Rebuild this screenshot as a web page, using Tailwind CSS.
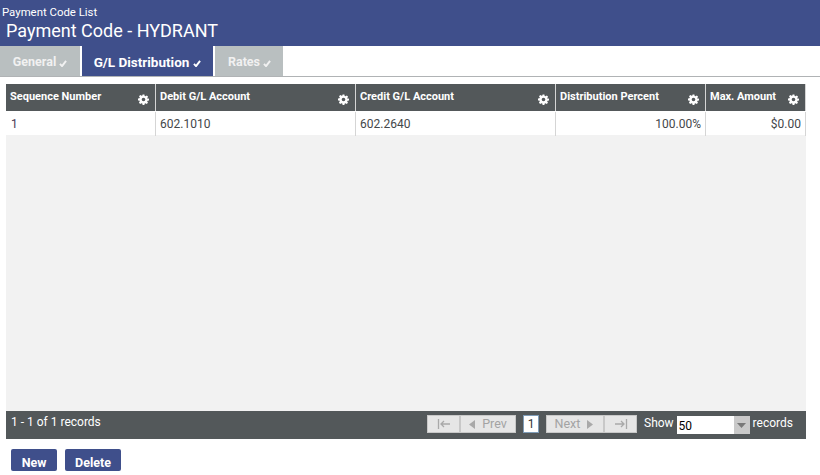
<!DOCTYPE html>
<html>
<head>
<meta charset="utf-8">
<script src="https://cdn.jsdelivr.net/npm/@tailwindcss/browser@4"></script>
</head>
<body class="w-[820px] h-[475px] overflow-hidden bg-white font-['Roboto',sans-serif] text-[#333]">
<header class="h-[46px] bg-[#3f4f8b] text-white">
  <div class="h-[19px] pl-[2px] pt-[5px] text-[11.4px] leading-[14px]">Payment Code List</div>
  <div class="pl-[6px] text-[18px] leading-[24px]">Payment Code - HYDRANT</div>
</header>
<nav class="flex h-[31px] gap-[2px] border-b border-[#b0b3b5] font-bold">
  <div class="flex w-[80px] h-[30px] items-center justify-center gap-[3px] bg-[#b9bfc0] pt-[2px] text-[12.5px] text-[#f1f1f1]">General
    <svg class="mt-[2px]" width="8" height="7" viewBox="0 0 9 8"><path d="M1 4.500 3.400 7 8 1" fill="none" stroke="currentColor" stroke-width="2.200"/></svg></div>
  <div class="flex w-[131px] h-[30px] items-center justify-center gap-[4px] bg-[#3f4f8b] pt-[2px] text-[13.500px] text-white">G/L Distribution
    <svg class="mt-[3px]" width="8" height="7" viewBox="0 0 9 8"><path d="M1 4.500 3.400 7 8 1" fill="none" stroke="currentColor" stroke-width="2.200"/></svg></div>
  <div class="flex w-[68px] h-[30px] items-center justify-center gap-[3px] bg-[#b9bfc0] pt-[2px] pl-[1px] text-[12.500px] text-[#f1f1f1]">Rates
    <svg class="mt-[2px]" width="8" height="7" viewBox="0 0 9 8"><path d="M1 4.500 3.400 7 8 1" fill="none" stroke="currentColor" stroke-width="2.200"/></svg></div>
</nav>
<main class="ml-[6px] mt-[7px] w-[800px]">
  <div class="grid h-[27px] grid-cols-[150px_200px_200px_150px_100px] bg-[#53585a] text-[11px] font-bold leading-[13px] text-white">
    <div class="relative border-r border-[#d5d5d5] pl-[4px] pt-[6px]">Sequence Number<svg class="absolute right-[6px] top-[10px]" width="11" height="11" viewBox="0 0 24 24"><path fill="#fff" fill-rule="evenodd" d="M10 1h4l.6 3.200 1.900.8 2.700-1.800 2.800 2.800-1.800 2.700.8 1.900L24 10v4l-3.200.6-.8 1.900 1.800 2.700-2.800 2.800-2.700-1.800-1.900.8L14 24h-4l-.6-3.200-1.900-.8-2.700 1.800L2 19l1.800-2.700-.8-1.900L0 14v-4l3.200-.6.8-1.900L2.200 5 5 2.200l2.700 1.800 1.900-.8zM12 8a4 4 0 1 0 0 8 4 4 0 0 0 0-8z"/></svg></div>
    <div class="relative border-r border-[#d5d5d5] pl-[4px] pt-[6px]">Debit G/L Account<svg class="absolute right-[6px] top-[10px]" width="11" height="11" viewBox="0 0 24 24"><path fill="#fff" fill-rule="evenodd" d="M10 1h4l.6 3.200 1.900.8 2.700-1.800 2.800 2.800-1.800 2.700.8 1.900L24 10v4l-3.200.6-.8 1.900 1.800 2.700-2.800 2.800-2.700-1.800-1.900.8L14 24h-4l-.6-3.200-1.900-.8-2.700 1.800L2 19l1.800-2.700-.8-1.900L0 14v-4l3.200-.6.8-1.900L2.200 5 5 2.200l2.700 1.800 1.900-.8zM12 8a4 4 0 1 0 0 8 4 4 0 0 0 0-8z"/></svg></div>
    <div class="relative border-r border-[#d5d5d5] pl-[4px] pt-[6px]">Credit G/L Account<svg class="absolute right-[6px] top-[10px]" width="11" height="11" viewBox="0 0 24 24"><path fill="#fff" fill-rule="evenodd" d="M10 1h4l.6 3.200 1.900.8 2.700-1.800 2.800 2.800-1.800 2.700.8 1.900L24 10v4l-3.200.6-.8 1.900 1.800 2.700-2.800 2.800-2.700-1.800-1.900.8L14 24h-4l-.6-3.200-1.900-.8-2.700 1.800L2 19l1.800-2.700-.8-1.900L0 14v-4l3.200-.6.8-1.900L2.200 5 5 2.200l2.700 1.800 1.900-.8zM12 8a4 4 0 1 0 0 8 4 4 0 0 0 0-8z"/></svg></div>
    <div class="relative border-r border-[#d5d5d5] pl-[4px] pt-[6px]">Distribution Percent<svg class="absolute right-[6px] top-[10px]" width="11" height="11" viewBox="0 0 24 24"><path fill="#fff" fill-rule="evenodd" d="M10 1h4l.6 3.200 1.900.8 2.700-1.800 2.800 2.800-1.800 2.700.8 1.900L24 10v4l-3.200.6-.8 1.900 1.800 2.700-2.800 2.800-2.700-1.800-1.900.8L14 24h-4l-.6-3.200-1.900-.8-2.700 1.800L2 19l1.800-2.700-.8-1.900L0 14v-4l3.200-.6.8-1.900L2.200 5 5 2.200l2.700 1.800 1.900-.8zM12 8a4 4 0 1 0 0 8 4 4 0 0 0 0-8z"/></svg></div>
    <div class="relative border-r border-[#d5d5d5] pl-[4px] pt-[6px]">Max. Amount<svg class="absolute right-[6px] top-[10px]" width="11" height="11" viewBox="0 0 24 24"><path fill="#fff" fill-rule="evenodd" d="M10 1h4l.6 3.200 1.900.8 2.700-1.800 2.800 2.800-1.800 2.700.8 1.900L24 10v4l-3.200.6-.8 1.900 1.800 2.700-2.800 2.800-2.700-1.800-1.900.8L14 24h-4l-.6-3.200-1.900-.8-2.700 1.800L2 19l1.800-2.700-.8-1.900L0 14v-4l3.200-.6.8-1.900L2.200 5 5 2.200l2.700 1.800 1.900-.8zM12 8a4 4 0 1 0 0 8 4 4 0 0 0 0-8z"/></svg></div>
  </div>
  <div class="grid h-[24px] grid-cols-[150px_200px_200px_150px_100px] bg-white pt-[1px] text-[12px] leading-[24px] text-[#44474a]">
    <div class="border-r border-[#d5d5d5] pl-[5px] text-[#4a3a55]">1</div>
    <div class="border-r border-[#d5d5d5] pl-[4px]">602.1010</div>
    <div class="border-r border-[#d5d5d5] pl-[4px]">602.2640</div>
    <div class="border-r border-[#d5d5d5] pr-[4px] text-right">100.00%</div>
    <div class="border-r border-[#d5d5d5] pr-[4px] text-right">$0.00</div>
  </div>
  <div class="h-[276px] bg-[#f2f2f2]"></div>
  <div class="flex h-[28px] items-center bg-[#53585a] text-[12px] text-white">
    <div class="mb-[6px] w-[421px] pl-[5px]">1 - 1 of 1 records</div>
    <div class="mb-[2px] flex h-[18px] w-[33px] items-center justify-center border border-[#c8c8c8] bg-[#e6e6e6]"><svg width="14" height="10" viewBox="0 0 14 10"><path d="M1.500 0v10M13 5H4M7 2 4 5l3 3" fill="none" stroke="#a9a9a9" stroke-width="1.300"/></svg></div>
    <div class="mb-[2px] flex h-[18px] w-[56px] items-center justify-center gap-[7px] border border-[#c8c8c8] bg-[#e6e6e6] text-[#a3a3a3]"><svg width="6" height="9" viewBox="0 0 6 9"><path d="M6 0v9L0 4.500z" fill="#a9a9a9"/></svg><span class="text-[12.500px]">Prev</span></div>
    <div class="mb-[2px] ml-[7px] flex h-[18px] w-[16px] items-center justify-center border border-[#7f9db9] bg-white text-[#333]">1</div>
    <div class="mb-[2px] ml-[7px] flex h-[18px] w-[58px] items-center justify-center gap-[7px] border border-[#c8c8c8] bg-[#e6e6e6] pr-[2px] text-[#a3a3a3]"><span class="text-[12.500px]">Next</span><svg width="6" height="9" viewBox="0 0 6 9"><path d="M0 0v9l6-4.500z" fill="#a9a9a9"/></svg></div>
    <div class="mb-[2px] flex h-[18px] w-[33px] items-center justify-center border border-[#c8c8c8] bg-[#e6e6e6]"><svg width="14" height="10" viewBox="0 0 14 10"><path d="M12.500 0v10M1 5h9M7 2l3 3-3 3" fill="none" stroke="#a9a9a9" stroke-width="1.300"/></svg></div>
    <span class="mb-[4px] ml-[7px]">Show</span>
    <div class="ml-[3px] flex h-[18px] w-[73px] bg-white text-black"><span class="flex-1 pl-[2px] pt-[2px] leading-[16px]">50</span><span class="flex w-[16px] items-center justify-center bg-[#c9c9c9]"><svg width="9" height="5" viewBox="0 0 9 5"><path d="M0 0h9L4.500 5z" fill="#787878"/></svg></span></div>
    <span class="mb-[4px] ml-[3px]">records</span>
  </div>
  <div class="ml-[5px] mt-[10px] flex gap-[8px] text-[12.500px] font-bold text-white">
    <button class="h-[22px] w-[46px] rounded-[2px] bg-[#3f4f8b] pt-[6px] leading-[16px]">New</button>
    <button class="h-[22px] w-[56px] rounded-[2px] bg-[#3f4f8b] pt-[6px] leading-[16px]">Delete</button>
  </div>
</main>
</body>
</html>
